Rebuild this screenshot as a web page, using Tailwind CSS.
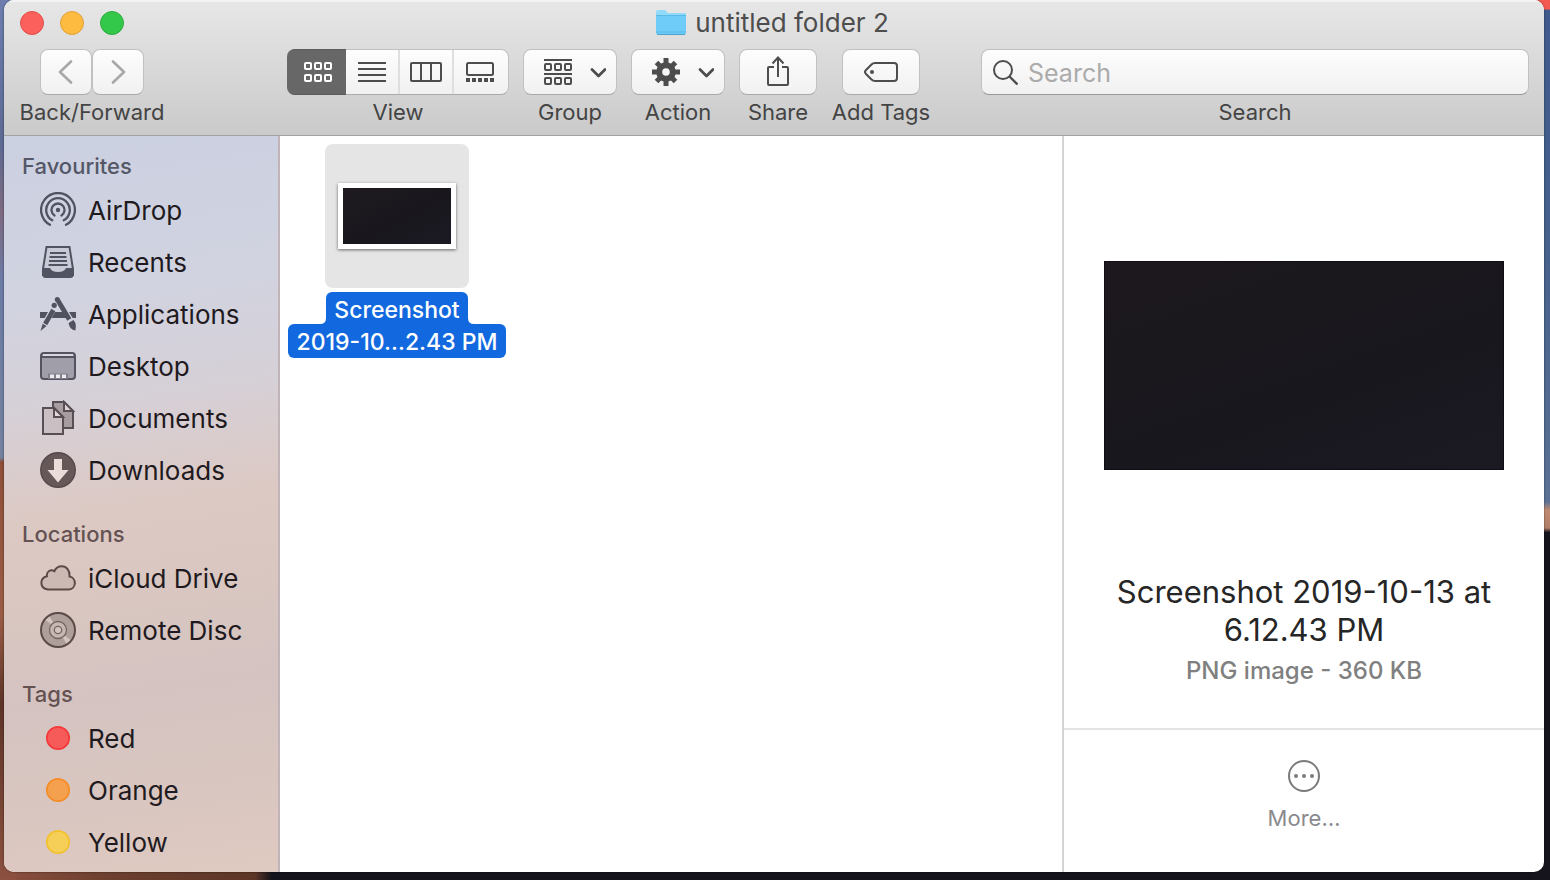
<!DOCTYPE html>
<html lang="en">
<head>
<meta charset="utf-8">
<title>untitled folder 2</title>
<script src="https://cdn.jsdelivr.net/npm/@tailwindcss/browser@4"></script>
</head>
<body class="relative h-screen overflow-hidden bg-[linear-gradient(90deg,#8c5040_0px,#6e4030_100px,#5c3527_255px,#14121a_272px)] pr-[6px] pb-2 pl-1 font-[Inter,'Liberation_Sans',sans-serif]">
<div class="absolute inset-y-0 left-0 w-4 bg-[linear-gradient(180deg,#6d7eae_0%,#5d6a94_16%,#7d6a80_24%,#6b7ba6_32%,#74819f_52%,#8d4f38_52.5%,#9a5c45_70%,#5c3428_80%,#7d4938_94%,#8c5040_100%)]"></div>
<div class="absolute inset-y-0 right-0 w-4 bg-[linear-gradient(180deg,#f25a52_0%,#f25a52_1%,#3f5a8c_1.2%,#47628c_30%,#5b7195_57%,#c08a70_58%,#b08069_60%,#15131c_60.5%,#15131c_100%)]"></div>

<div class="relative flex h-full flex-col overflow-hidden rounded-[10px] bg-white shadow-[0_0_2px_rgba(0,0,0,0.6)]">
  <header class="shrink-0 border-b border-[#a3a3a3] bg-linear-to-b from-[#e7e7e7] to-[#cacaca] pb-[7px] shadow-[inset_0_2px_0_#f3f3f3]">
    <div class="grid h-[49px] grid-cols-[1fr_auto_1fr] items-center pr-5 pb-1 pl-4">
      <div class="flex gap-4">
        <button aria-label="Close" class="size-6 rounded-full border border-[#e2504a] bg-[#fc605c]"></button>
        <button aria-label="Minimise" class="size-6 rounded-full border border-[#e0a03a] bg-[#fdbc40]"></button>
        <button aria-label="Zoom" class="size-6 rounded-full border border-[#2dac3e] bg-[#34c84a]"></button>
      </div>
      <h1 class="flex items-center gap-2 text-[26px] leading-8 text-[#4d4d4d]">
        <svg class="h-7 w-8" viewBox="0 0 32 28"><path d="M1 3q0-2 2-2h7l3 3h17q1 0 1 1v19q0 1-1 1H2q-1 0-1-1z" fill="#92dafb"/><path d="M1 6h30v17.500q0 1.500-1.500 1.500h-27Q1 25 1 23.500z" fill="#6fcbf7"/><path d="M1 6.500h30M1 23h30" stroke="#5cb9e6" fill="none"/><path d="M2 25.500h28" stroke="#4da3cd"/></svg>
        untitled folder 2
      </h1>
      <span></span>
    </div>
    <div class="flex items-start pr-[15px] pl-4 text-[22px] leading-8 text-[#444] [&_svg]:shrink-0">
      <div class="flex w-[144px] flex-col items-center gap-px">
        <div class="flex">
          <button aria-label="Back" class="flex h-[46px] w-[52px] items-center justify-center rounded-lg border border-[#c1c1c1] border-b-[#ababab] bg-linear-to-b from-[#fdfdfd] to-[#f1f1f1]"><svg class="size-7" viewBox="0 0 28 28" fill="none" stroke="#a9a9a9" stroke-width="2.700" stroke-linecap="round" stroke-linejoin="round"><path d="M19 3.500 8 14l11 10.500"/></svg></button>
          <button aria-label="Forward" class="flex h-[46px] w-[52px] items-center justify-center rounded-lg border border-[#c1c1c1] border-b-[#ababab] bg-linear-to-b from-[#fdfdfd] to-[#f1f1f1]"><svg class="size-7" viewBox="0 0 28 28" fill="none" stroke="#a9a9a9" stroke-width="2.700" stroke-linecap="round" stroke-linejoin="round"><path d="m9 3.500 11 10.500L9 24.500"/></svg></button>
        </div>
        <span>Back/Forward</span>
      </div>
      <div class="ml-[123px] flex w-[222px] flex-col items-center gap-px">
        <div class="flex h-[46px] w-full rounded-lg border-y border-r border-[#c1c1c1] border-b-[#ababab] bg-linear-to-b from-[#fdfdfd] to-[#f1f1f1]">
          <button aria-label="Icons" aria-pressed="true" class="-my-px flex w-[59px] items-center justify-center rounded-l-lg border-y border-[#5c5c5c] bg-[#676767] pl-[2px]"><svg class="h-5 w-7" viewBox="0 0 28 20" fill="none" stroke="#fff" stroke-width="2"><rect x="1" y="1" width="6" height="6" rx="1"/><rect x="11" y="1" width="6" height="6" rx="1"/><rect x="21" y="1" width="6" height="6" rx="1"/><rect x="1" y="13" width="6" height="6" rx="1"/><rect x="11" y="13" width="6" height="6" rx="1"/><rect x="21" y="13" width="6" height="6" rx="1"/></svg></button>
          <button aria-label="List" class="flex w-[52px] items-center justify-center"><svg class="h-5 w-7" viewBox="0 0 28 20" stroke="#4d4d4d" stroke-width="2"><path d="M0 1h28M0 7h28M0 13h28M0 19h28"/></svg></button>
          <button aria-label="Columns" class="flex w-[54px] items-center justify-center border-l-2 border-[#dfdfdf]"><svg class="h-5 w-8" viewBox="0 0 32 20" fill="none" stroke="#4d4d4d" stroke-width="2"><rect x="1" y="1" width="30" height="18" rx="1"/><path d="M11 1v18M21 1v18"/></svg></button>
          <button aria-label="Gallery" class="flex w-[54px] items-center justify-center border-l-2 border-[#dfdfdf]"><svg class="h-5 w-7" viewBox="0 0 28 20" fill="none" stroke="#4d4d4d" stroke-width="2"><rect x="1" y="1" width="26" height="12" rx="1.500"/><path d="M0 18h28" stroke-width="4" stroke-dasharray="4 2"/></svg></button>
        </div>
        <span>View</span>
      </div>
      <div class="ml-[14px] flex w-[94px] flex-col items-center gap-px">
        <button aria-label="Group" class="flex h-[46px] w-full items-center gap-[18px] rounded-lg border border-[#c1c1c1] border-b-[#ababab] bg-linear-to-b from-[#fdfdfd] to-[#f1f1f1] pl-5">
          <svg class="h-[26px] w-7" viewBox="0 0 28 26" fill="none" stroke="#4d4d4d" stroke-width="2"><path d="M0 1h28M0 15h28"/><rect x="1" y="5" width="6" height="6" rx="1"/><rect x="11" y="5" width="6" height="6" rx="1"/><rect x="21" y="5" width="6" height="6" rx="1"/><rect x="1" y="19" width="6" height="6" rx="1"/><rect x="11" y="19" width="6" height="6" rx="1"/><rect x="21" y="19" width="6" height="6" rx="1"/></svg>
          <svg class="h-3 w-4" viewBox="0 0 16 12" fill="none" stroke="#4d4d4d" stroke-width="2.700" stroke-linecap="round" stroke-linejoin="round"><path d="m2 3.500 6.500 6.500L15 3.500"/></svg>
        </button>
        <span>Group</span>
      </div>
      <div class="ml-[14px] flex w-[94px] flex-col items-center gap-px">
        <button aria-label="Action" class="flex h-[46px] w-full items-center gap-[18px] rounded-lg border border-[#c1c1c1] border-b-[#ababab] bg-linear-to-b from-[#fdfdfd] to-[#f1f1f1] pl-5">
          <svg class="size-7" viewBox="-14 -14 28 28" stroke="#4d4d4d"><circle r="6.800" fill="none" stroke-width="6"/><g stroke-width="5"><path d="M0-14v7M0 7v7M-14 0h7M7 0h7"/><path d="M-9.500-9.500-5-5M5 5l4.500 4.500M-9.500 9.500-5 5M5-5l4.500-4.500"/></g></svg>
          <svg class="h-3 w-4" viewBox="0 0 16 12" fill="none" stroke="#4d4d4d" stroke-width="2.700" stroke-linecap="round" stroke-linejoin="round"><path d="m2 3.500 6.500 6.500L15 3.500"/></svg>
        </button>
        <span>Action</span>
      </div>
      <div class="ml-[14px] flex w-[78px] flex-col items-center gap-px">
        <button aria-label="Share" class="flex h-[46px] w-full items-center justify-center rounded-lg border border-[#c1c1c1] border-b-[#ababab] bg-linear-to-b from-[#fdfdfd] to-[#f1f1f1]"><svg class="h-8 w-6" viewBox="0 0 24 32" fill="none" stroke="#4d4d4d" stroke-width="2"><path d="M8 11H3q-1 0-1 1v16q0 1 1 1h18q1 0 1-1V12q0-1-1-1h-5M12 21V2"/><path d="m6.500 7.500 5.500-6 5.500 6"/></svg></button>
        <span>Share</span>
      </div>
      <div class="ml-[15px] flex w-[98px] flex-col items-center gap-px">
        <button aria-label="Add Tags" class="flex h-[46px] w-[78px] items-center justify-center rounded-lg border border-[#c1c1c1] border-b-[#ababab] bg-linear-to-b from-[#fdfdfd] to-[#f1f1f1]"><svg class="h-5 w-[34px]" viewBox="0 0 34 20" fill="none" stroke="#4d4d4d" stroke-width="2"><path d="M11 1h19q3 0 3 3v12q0 3-3 3H11q-2 0-3.500-1.500L2 12q-2-2 0-4l5.500-5.500Q9 1 11 1z"/><circle cx="8" cy="10" r="2" fill="#4d4d4d" stroke="none"/></svg></button>
        <span class="whitespace-nowrap">Add Tags</span>
      </div>
      <div class="ml-[51px] flex flex-1 flex-col items-center gap-px">
        <div class="flex h-[46px] w-full items-center gap-[10px] rounded-lg border border-[#c1c1c1] border-b-[#999] bg-linear-to-b from-[#fdfdfd] to-[#f1f1f1] pl-[10px]">
          <svg class="size-[26px]" viewBox="0 0 26 26" fill="none" stroke="#4d4d4d" stroke-width="2"><circle cx="11" cy="11" r="9"/><path d="m17.500 17.500 8 8" stroke-width="2.400"/></svg>
          <input id="search" type="text" placeholder="Search" class="h-10 min-w-0 flex-1 bg-transparent pt-[2px] text-[25px] text-[#333] outline-none placeholder:text-[#ababab]">
        </div>
        <label for="search">Search</label>
      </div>
    </div>
  </header>

  <div class="flex min-h-0 flex-1">
    <nav class="flex w-[276px] shrink-0 flex-col gap-[18px] overflow-hidden border-r-2 border-[#c0b4b8] bg-[linear-gradient(172deg,#cbd0e1_0%,#d1d3e0_22%,#d6d0d7_36%,#dcc9c4_50%,#dac7c1_60%,#d4c3c1_74%,#d9c6c0_88%,#dfcac1_100%)] pt-[11px] text-[26px] text-[#1f1a20] [&_h2]:h-[38px] [&_h2]:pl-[18px] [&_h2]:text-[22px] [&_h2]:leading-[38px] [&_h2]:font-medium [&_svg]:size-9 [&_svg]:shrink-0">
      <section>
        <h2 class="text-[#545766]">Favourites</h2>
        <ul class="[&_a]:flex [&_a]:h-[52px] [&_a]:items-center [&_a]:gap-3 [&_a]:pb-[2px] [&_a]:pl-9">
          <li><a href="#airdrop"><svg viewBox="0 0 36 36" fill="none" stroke="#505361" stroke-width="2.300"><circle cx="18" cy="18" r="2.200" fill="#505361" stroke="none"/><path stroke-linecap="round" d="M14.500 23.500a6.500 6.500 0 1 1 7 0M12.300 28.300a11.800 11.800 0 1 1 11.400 0M10 32.800a16.900 16.900 0 1 1 16 0"/></svg>AirDrop</a></li>
          <li><a href="#recents"><svg viewBox="0 0 36 36" fill="none" stroke="#505361" stroke-width="2"><path d="M6.500 3h23L33 25v6H3v-6z" fill="#c8cad8"/><path d="M10 9h16M9.500 13h17M9 17h18M8.500 21h19"/><path d="M2.500 24H10q1.500 4 8 4t8-4h7.500v7q0 3-3 3h-25q-3 0-3-3z" fill="#505361" stroke="none"/></svg>Recents</a></li>
          <li><a href="#applications"><svg viewBox="0 0 36 36" fill="#50525f"><path d="M0 16h8l-3.300 6H0zM15 16h8l3.500 6H11.500zM29 16h7v6h-3.300z"/><path d="M17.500 3.800 29.300 23.500" stroke="#50525f" stroke-width="4.800"/><path d="M13.300 14 5.200 28" stroke="#50525f" stroke-width="4.600"/><circle cx="17.300" cy="3.500" r="2.500"/><circle cx="14.200" cy="9.300" r="2.600"/><path d="m28.500 27 5-3q3.500 3.500 1.800 10.500-5.800-1-6.800-7.500zM2.700 27.800l3.800 2.300L.5 35z"/></svg>Applications</a></li>
          <li><a href="#desktop"><svg viewBox="0 0 36 36" fill="none"><rect x="1" y="5" width="34" height="26" rx="3" fill="#a09ea9" stroke="#55535f" stroke-width="2"/><path d="M3 7h30" stroke="#d8d7df" stroke-width="2"/><path d="M1 9h34" stroke="#55535f" stroke-width="2"/><path d="M8 25.500h20V31H8z" fill="#817f8a"/><path d="M10 26.500h4v3.500h-4zM16 26.500h4v3.500h-4zM22 26.500h4v3.500h-4z" fill="#eeebef"/></svg>Desktop</a></li>
          <li><a href="#documents"><svg viewBox="0 0 36 36" stroke="#574f54" stroke-width="2"><path d="M13 2h11l9 9v17H13z" fill="#a79c9f"/><path d="M24 2v9h9z" fill="#ded5d8"/><path d="M3 8h11l9 9v17H3z" fill="#cabfc2"/><path d="M14 8v9h9z" fill="#e0d7da"/></svg>Documents</a></li>
          <li><a href="#downloads"><svg viewBox="0 0 36 36"><circle cx="18" cy="18" r="17.200" fill="#665759" stroke="#56484b" stroke-width="1.500"/><path d="M14 7h8v11h6.500L18 30.500 7.500 18H14z" fill="#e9dcd9"/></svg>Downloads</a></li>
        </ul>
      </section>
      <section>
        <h2 class="text-[#645252]">Locations</h2>
        <ul class="[&_a]:flex [&_a]:h-[52px] [&_a]:items-center [&_a]:gap-3 [&_a]:pb-[2px] [&_a]:pl-9">
          <li><a href="#icloud"><svg viewBox="0 0 36 36"><path d="M8 29.500h20.500a6.500 6.500 0 0 0 1-12.900C30 10.500 26.500 6.300 21.700 6.300c-3.500 0-6 1.900-7.300 4.900-3.600-2.400-8.200.2-7.500 5C-.5 18-.8 28.500 8 29.500z" fill="#ccb9b4" stroke="#5b4a48" stroke-width="2"/></svg>iCloud Drive</a></li>
          <li><a href="#disc"><svg viewBox="0 0 36 36" fill="none" stroke="#5b4a48"><circle cx="18" cy="18" r="17" fill="#af9f9b" stroke-width="2"/><path d="M18 18 5.500 8 9.500 4.500zM18 18l12.500 10-4 3.500z" fill="#d2c4c0" stroke="none"/><circle cx="18" cy="18" r="8.500" fill="#c7b7b3" stroke="#75645f" stroke-width="1.300"/><circle cx="18" cy="18" r="3.700" fill="#d4c4c0" stroke="#75645f" stroke-width="1.300"/></svg>Remote Disc</a></li>
        </ul>
      </section>
      <section>
        <h2 class="text-[#645252]">Tags</h2>
        <ul class="[&_a]:flex [&_a]:h-[52px] [&_a]:items-center [&_a]:gap-3 [&_a]:pb-[2px] [&_a]:pl-9">
          <li><a href="#red"><svg viewBox="0 0 36 36"><circle cx="18" cy="18" r="11.200" fill="#f65b59" stroke="#f5393a" stroke-width="1.700"/></svg>Red</a></li>
          <li><a href="#orange"><svg viewBox="0 0 36 36"><circle cx="18" cy="18" r="11.200" fill="#f5a04f" stroke="#f48d27" stroke-width="1.700"/></svg>Orange</a></li>
          <li><a href="#yellow"><svg viewBox="0 0 36 36"><circle cx="18" cy="18" r="11.200" fill="#f5cf58" stroke="#f3c02e" stroke-width="1.700"/></svg>Yellow</a></li>
        </ul>
      </section>
    </nav>

    <main class="min-w-0 flex-1 p-2">
      <figure class="flex w-[218px] flex-col items-center gap-1">
        <div class="flex size-36 items-center justify-center rounded-lg bg-[#e5e5e5]">
          <div class="h-[66px] w-[118px] border-[5px] border-white bg-linear-to-br from-[#1e1a20] via-[#19171d] to-[#1b1922] shadow-[0_1px_3px_rgba(0,0,0,0.55)]"></div>
        </div>
        <figcaption class="flex w-full flex-col items-center text-center text-[23px] leading-8 font-medium text-white">
          <span class="relative h-8 w-[142px] rounded-t-md bg-[#1268de] pt-[2px]">Screenshot
            <svg class="absolute right-full bottom-0 size-[6px]" viewBox="0 0 6 6"><path d="M6 0v6H0q6 0 6-6z" fill="#1268de"/></svg>
            <svg class="absolute bottom-0 left-full size-[6px]" viewBox="0 0 6 6"><path d="M0 0v6h6Q0 6 0 0z" fill="#1268de"/></svg>
          </span>
          <span class="h-[34px] w-full rounded-md bg-[#1268de] pt-[2px] whitespace-nowrap">2019-10…2.43 PM</span>
        </figcaption>
      </figure>
    </main>

    <aside class="flex w-[482px] shrink-0 flex-col border-l-2 border-[#d4d4d4] text-center">
      <div class="flex flex-col items-center border-b-2 border-[#e4e4e4] px-10 pt-[125px] pb-[39px]">
        <div class="h-[209px] w-full border border-[#100c14] bg-[linear-gradient(160deg,#1d181d_0%,#1a181d_35%,#18171e_60%,#1b1922_100%)]"></div>
        <h2 class="mt-[103px] text-[31px] leading-[38px] text-[#262626]">Screenshot 2019-10-13 at 6.12.43 PM</h2>
        <p class="mt-1 text-[24px] leading-9 font-medium text-[#808080]">PNG image - 360 KB</p>
      </div>
      <button class="mt-[30px] flex flex-col items-center gap-[10px] self-center text-[22px] leading-8 text-[#8a8a8e]">
        <svg class="size-8" viewBox="0 0 32 32" fill="#7b7b7b"><circle cx="16" cy="16" r="15" fill="none" stroke="#7b7b7b" stroke-width="2"/><circle cx="8" cy="16" r="2"/><circle cx="16" cy="16" r="2"/><circle cx="24" cy="16" r="2"/></svg>
        More…
      </button>
    </aside>
  </div>
</div>
</body>
</html>
